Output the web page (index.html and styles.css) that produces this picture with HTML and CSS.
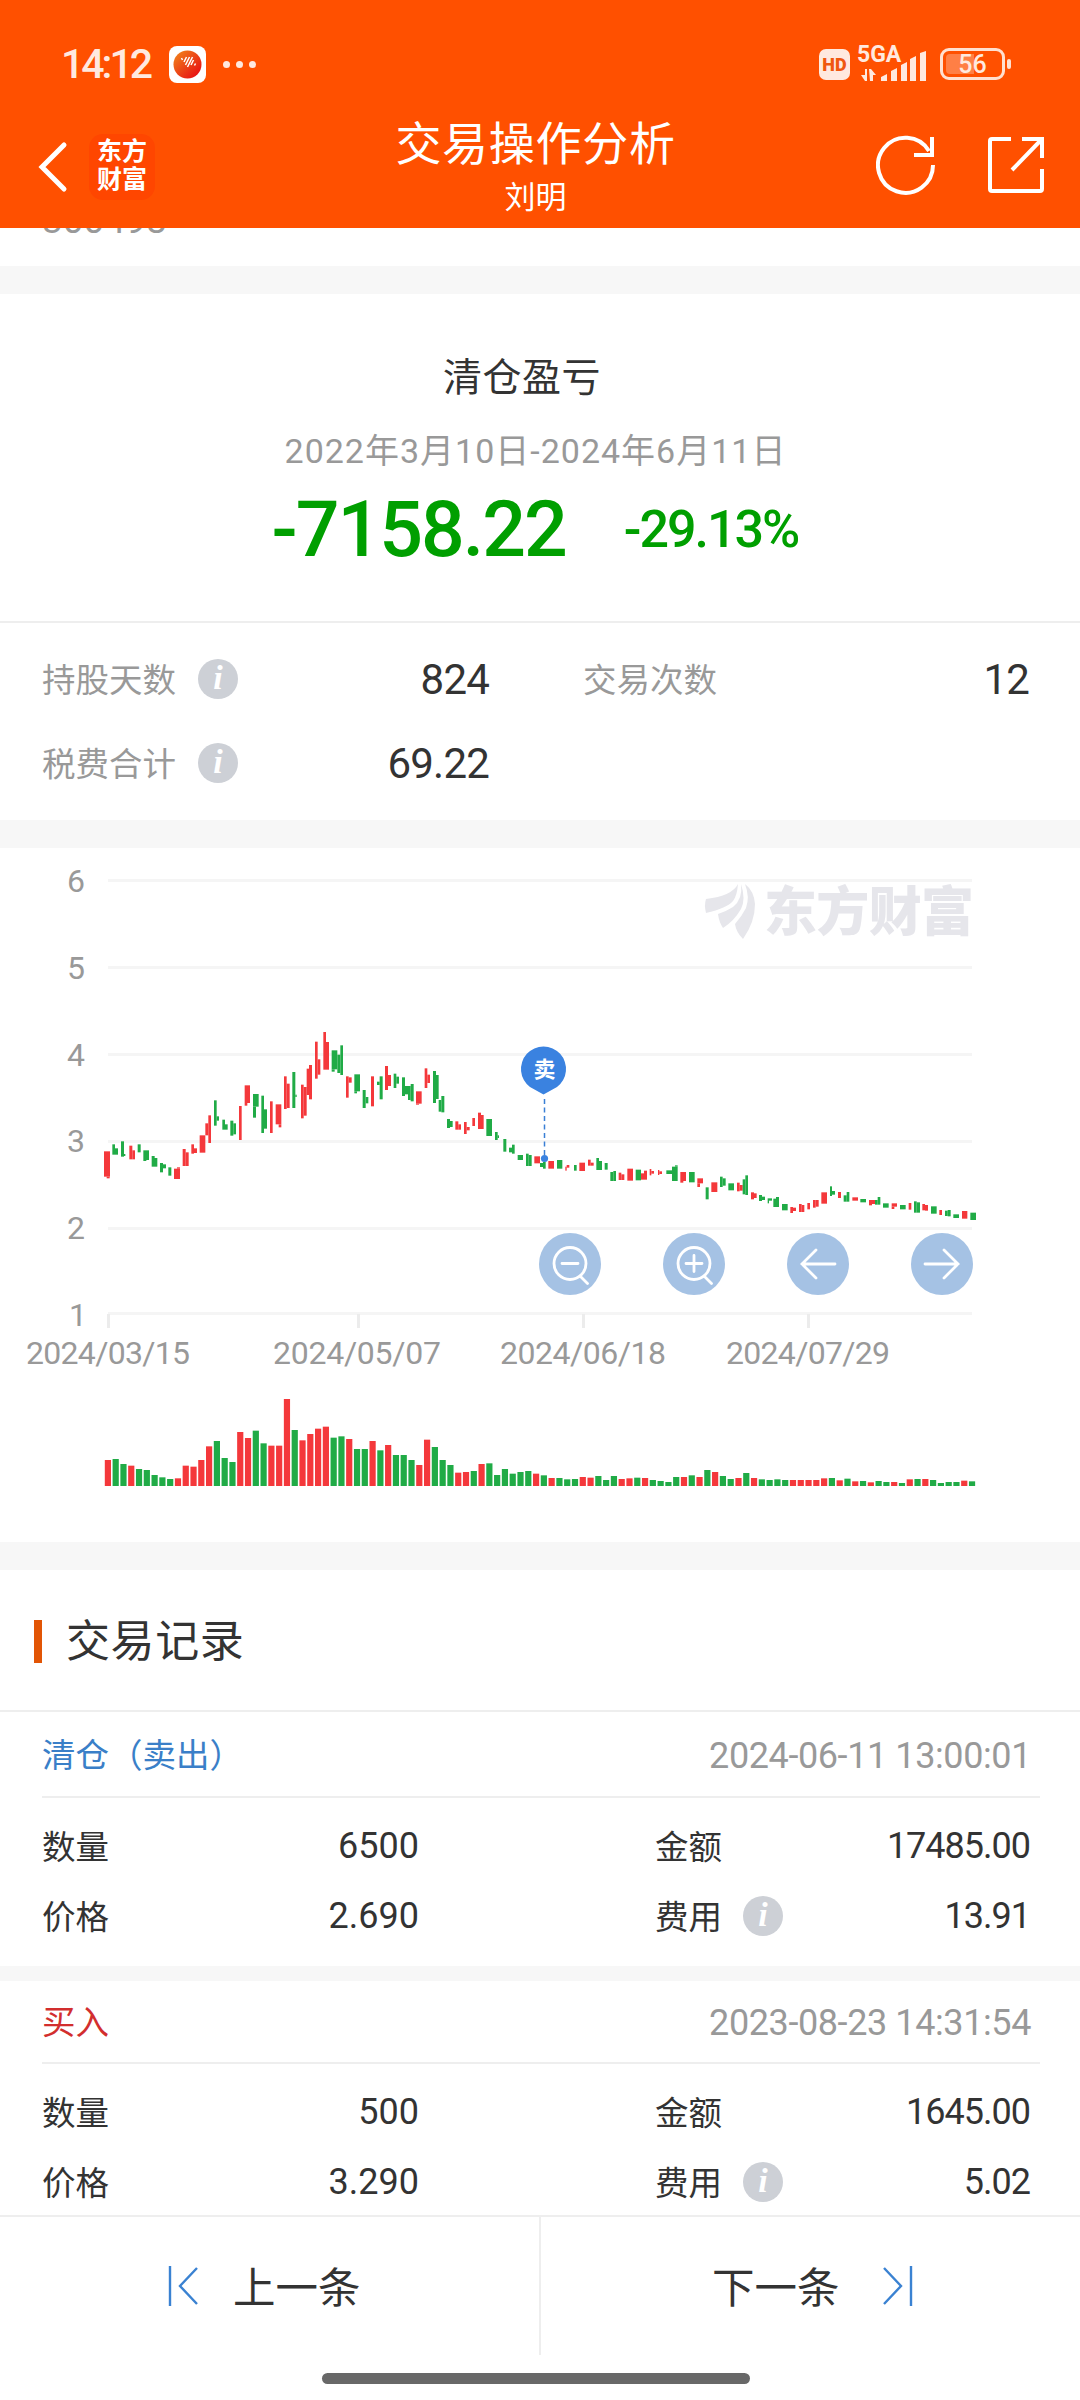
FILE: index.html
```html
<!DOCTYPE html>
<html lang="zh-CN">
<head>
  <meta charset="UTF-8" />
  <title>交易操作分析</title>
  <meta name="viewport" content="width=device-width, initial-scale=1.0" />
  <link rel="stylesheet" href="styles.css">
</head>
<body>
  <div class="app">
    <header class="header">
      <div class="status-bar">
        <span class="time">14:12</span>
        <svg class="app-icon" width="37" height="37" viewBox="0 0 37 37">
          <defs>
            <linearGradient id="ball" x1="0" y1="0" x2="1" y2="1">
              <stop offset="0" stop-color="#f28a1c" />
              <stop offset="1" stop-color="#e60012" />
            </linearGradient>
          </defs>
          <rect width="37" height="37" rx="8" fill="#fff" />
          <circle cx="18.5" cy="18.5" r="14" fill="url(#ball)" />
          <path d="M12.500 12l1 2M15 16l2.500-5M16.500 19l4-8M18.500 21l5-10M22 19l2.500-5M25.500 19.500l1-2" stroke="#fff" stroke-width="1.5" />
        </svg>
        <span class="dots"><i></i><i></i><i></i></span>
        <span class="spacer"></span>
        <span class="hd">HD</span>
        <span class="signal">
          <span class="net">5GA</span>
          <svg width="70" height="36" viewBox="0 0 70 36" fill="#ffe9df">
            <path d="M4 29h4v-6h2v12h-2zM12 23h2l5 6h-3v6h-3z" />
            <path d="M24 31l6-3v7h-6zM34 25l6-3v13h-6zM44 19l6-3v19h-6zM53 13l6-3v25h-6zM63 7l6-2v30h-6z" />
          </svg>
        </span>
        <span class="battery"><span class="battery-fill"></span><b>56</b></span>
        <span class="nub"></span>
      </div>
      <div class="nav">
        <svg class="back" width="30" height="52" viewBox="0 0 30 52">
          <path d="M26 4L4 26l22 22" fill="none" stroke="#fff" stroke-width="5" stroke-linecap="round" />
        </svg>
        <div class="brand">东方<br>财富</div>
        <div class="titles">
          <h1>交易操作分析</h1>
          <p>刘明</p>
        </div>
        <svg class="refresh" width="60" height="60" viewBox="0 0 60 60" fill="none" stroke="#fff" stroke-width="4">
          <path d="M57 30A27.5 27.5 0 1 1 53 16" />
          <path d="M56 2v18H38" />
        </svg>
        <svg class="share" width="60" height="60" viewBox="0 0 60 60" fill="none" stroke="#fff" stroke-width="4">
          <path d="M25 4H6Q4 4 4 6V54Q4 56 6 56H54Q56 56 56 54V34M36 4H56V23M56 4L26 35" />
        </svg>
      </div>
    </header>

    <main class="content">
      <div class="code"><span>300498</span></div>

      <section class="profit">
        <h2>清仓盈亏</h2>
        <p class="range">2022年3月10日-2024年6月11日</p>
        <div class="amounts">
          <span class="amount">-7158.22</span>
          <span class="percent">-29.13%</span>
        </div>
      </section>

      <section class="stats">
        <div class="stat"><span>持股天数</span><i class="info">i</i><b>824</b></div>
        <div class="stat"><span>交易次数</span><b>12</b></div>
        <div class="stat"><span>税费合计</span><i class="info">i</i><b>69.22</b></div>
      </section>

      <section class="chart">
        <svg width="1080" height="694" viewBox="0 848 1080 694">
          <g class="grid">
            <path d="M108 880.5H972M108 967.5H972M108 1054.5H972M108 1141.5H972M108 1228.5H972M108 1313.5H972" />
            <path class="ticks" d="M108.5 1314V1328M358.5 1314V1328M583.5 1314V1328M808.5 1314V1328" />
          </g>
          <g class="axis-y">
            <text x="85" y="892">6</text>
            <text x="85" y="979">5</text>
            <text x="85" y="1066">4</text>
            <text x="85" y="1152">3</text>
            <text x="85" y="1239">2</text>
            <text x="87" y="1326">1</text>
          </g>
          <g class="axis-x">
            <text x="108" y="1364" textLength="164">2024/03/15</text>
            <text x="357" y="1364" textLength="168">2024/05/07</text>
            <text x="583" y="1364" textLength="166">2024/06/18</text>
            <text x="808" y="1364" textLength="164">2024/07/29</text>
          </g>
          <g class="watermark">
            <path d="M738 884Q732 896 706 899Q704 905 706 913Q727 908 733 901Q737 896 738 884Z" />
            <path d="M741 884Q743 899 733 907Q725 912 718 914Q719 922 723 928Q734 921 741 909Q746 899 741 884Z" />
            <path d="M745 884Q750 897 746 908Q742 916 735 924Q736 932 743 939Q755 922 755 904Q754 891 745 884Z" />
            <text x="764" y="931" textLength="210">东方财富</text>
          </g>
          <g id="candles"></g>
          <g id="volumes"></g>
          <g class="pin">
            <path d="M544.5 1155V1096" stroke="#3a7fd5" stroke-width="1.5" stroke-dasharray="5 3.5" />
            <circle cx="544.5" cy="1158.5" r="3.6" />
            <path d="M543.5 1094.5L530 1087A22.5 22.5 0 1 1 557 1087Z" />
            <text x="544.5" y="1077">卖</text>
          </g>
        </svg>
        <div class="tools">
          <button><svg viewBox="0 0 62 62"><circle cx="31" cy="30.5" r="16" /><path d="M41.500 43.500l7 7M23 30.500h16" /></svg></button>
          <button><svg viewBox="0 0 62 62"><circle cx="31" cy="30.5" r="16" /><path d="M41.500 43.500l7 7M23 30.500h16M31 22.500v16" /></svg></button>
          <button><svg viewBox="0 0 62 62"><path d="M48 31H15M29 17L15 31l14 14" /></svg></button>
          <button><svg viewBox="0 0 62 62"><path d="M14 31h33M33 17l14 14-14 14" /></svg></button>
        </div>
      </section>

      <section class="records">
        <h3><span>交易记录</span></h3>
        <div class="record">
          <div class="record-head"><span class="sell">清仓（卖出）</span><time>2024-06-11 13:00:01</time></div>
          <div class="record-body">
            <div class="cell"><span>数量</span><b>6500</b></div>
            <div class="cell"><span>金额</span><b>17485.00</b></div>
            <div class="cell"><span>价格</span><b>2.690</b></div>
            <div class="cell"><span>费用</span><i class="info">i</i><b>13.91</b></div>
          </div>
        </div>
        <div class="record">
          <div class="record-head"><span class="buy">买入</span><time>2023-08-23 14:31:54</time></div>
          <div class="record-body">
            <div class="cell"><span>数量</span><b>500</b></div>
            <div class="cell"><span>金额</span><b>1645.00</b></div>
            <div class="cell"><span>价格</span><b>3.290</b></div>
            <div class="cell"><span>费用</span><i class="info">i</i><b>5.02</b></div>
          </div>
        </div>
      </section>
    </main>

    <footer class="footer">
      <div class="pager">
        <a class="prev">
          <svg width="32" height="42" viewBox="0 0 32 42"><path d="M2 1v40M29 3L12 21l17 18" /></svg>
          <span>上一条</span>
        </a>
        <a class="next">
          <span>下一条</span>
          <svg width="32" height="42" viewBox="0 0 32 42"><path d="M30 1v40M3 3l17 18L3 39" /></svg>
        </a>
      </div>
      <div class="home-bar"></div>
    </footer>
  </div>
  <script src="chart.js"></script>
</body>
</html>
```
FILE: styles.css
```css
* {
  box-sizing: border-box;
}

body {
  margin: 0;
  background: #fff;
  color: #333;
  font-family: Roboto, "Noto Sans CJK SC", sans-serif;
}

h1, h2, h3, p {
  margin: 0;
  font-weight: 400;
}

b {
  font-weight: 400;
}

.app {
  width: 1080px;
  height: 2400px;
  display: flex;
  flex-direction: column;
  overflow: hidden;
}

/* header */
.header {
  height: 228px;
  flex: none;
  background: #ff5000;
  color: #fff;
}

.status-bar {
  height: 105px;
  padding: 23px 69px 0 61px;
  display: flex;
  align-items: center;
  color: #ffe9df;
}

.time {
  width: 108px;
  font-size: 41px;
  font-weight: 500;
  letter-spacing: -3px;
}

.dots {
  display: flex;
  gap: 6px;
  margin-left: 17px;
}

.dots i {
  width: 7px;
  height: 7px;
  border-radius: 50%;
  background: #ffe9df;
}

.spacer {
  flex: 1;
}

.hd {
  width: 31px;
  height: 31px;
  border-radius: 7px;
  background: #ffe9df;
  color: #f0570f;
  font-size: 18px;
  font-weight: 900;
  line-height: 31px;
  text-align: center;
  margin-right: 7px;
}

.signal {
  position: relative;
  width: 70px;
  height: 36px;
  margin-right: 13px;
}

.net {
  position: absolute;
  left: 0;
  top: -4px;
  font-size: 23px;
  font-weight: 700;
  line-height: 26px;
}

.battery {
  width: 65px;
  height: 32px;
  border: 3px solid #ffe0d0;
  border-radius: 9px;
  position: relative;
  text-align: center;
}

.battery b {
  position: relative;
  font-size: 25px;
  font-weight: 500;
  line-height: 27px;
}

.battery-fill {
  position: absolute;
  left: 3px;
  top: 3px;
  width: 28px;
  height: 20px;
  border-radius: 4px 0 0 4px;
  background: #ff7f45;
}

.nub {
  width: 4px;
  height: 10px;
  margin-left: 2px;
  border-radius: 2px;
  background: #ffe0d0;
}

.nav {
  height: 123px;
  display: flex;
  align-items: center;
  padding: 0 34px 0 38px;
}

.back {
  margin-top: 1px;
}

.brand {
  width: 66px;
  height: 66px;
  margin-left: 21px;
  padding-top: 4px;
  border-radius: 14px;
  background: #ff4600;
  font-size: 25px;
  font-weight: 700;
  line-height: 28px;
  text-align: center;
}

.titles {
  flex: 1;
  padding-right: 20px;
  text-align: center;
  margin-left: 60px;
}

.titles h1 {
  font-size: 46px;
  line-height: 62px;
  letter-spacing: 0.7px;
}

.titles p {
  font-size: 31px;
  line-height: 46px;
}

.refresh, .share {
  margin-bottom: 3px;
}

.share {
  margin-left: 50px;
}

/* stock code left from the block above, cut by the header */
.code {
  height: 66px;
  flex: none;
  overflow: hidden;
  border-bottom: 28px solid #f7f7f7;
}

.code span {
  display: block;
  margin: -29px 0 0 42px;
  font-size: 37px;
  line-height: 44px;
  color: #999;
}

/* profit summary */
.profit {
  height: 329px;
  padding-top: 56px;
  text-align: center;
  border-bottom: 2px solid #eee;
}

.profit h2 {
  font-size: 39px;
  line-height: 56px;
  letter-spacing: 0.5px;
  padding-right: 36px;
}

.range {
  margin-top: 19px;
  padding-right: 9px;
  font-size: 34px;
  line-height: 52px;
  letter-spacing: 1px;
  color: #999;
}

.amounts {
  display: flex;
  justify-content: center;
  align-items: center;
  gap: 58px;
  margin-top: 13px;
  padding-right: 10px;
  color: #009f00;
  font-weight: 500;
}

.amount {
  font-size: 77px;
  line-height: 80px;
  letter-spacing: -2px;
}

.percent {
  font-size: 52px;
  line-height: 80px;
  letter-spacing: -2px;
}

/* stats */
.stats {
  height: 225px;
  padding: 14px 51px 0 42px;
  display: grid;
  grid-template-columns: 447px 446px;
  grid-auto-rows: 84px;
  column-gap: 94px;
  border-bottom: 28px solid #f7f7f7;
}

.stat {
  display: flex;
  align-items: center;
  font-size: 33.5px;
  color: #999;
}

.stat span, .cell span, .record-head span, .records h3 span, .pager span {
  padding-bottom: 4px;
}

.stat b {
  margin-left: auto;
  color: #333;
  font-size: 42px;
  letter-spacing: -0.8px;
}

.info {
  width: 40px;
  height: 40px;
  margin-left: 22px;
  border-radius: 50%;
  background: #cdd0d6;
  color: #fff;
  font: italic bold 34px/38px "Liberation Serif", serif;
  text-align: center;
}

/* chart */
.chart {
  position: relative;
  height: 722px;
  border-bottom: 28px solid #f7f7f7;
}

.chart > svg {
  display: block;
}

.grid {
  fill: none;
  stroke: #f5f5f5;
  stroke-width: 3;
}

.ticks {
  stroke: #ececec;
}

.axis-x, .axis-y {
  fill: #999;
  font-size: 32px;
}

.axis-x {
  text-anchor: middle;
}

.axis-y {
  text-anchor: end;
}

.watermark {
  fill: #e6e6eb;
}

.watermark text {
  font-size: 53px;
  font-weight: 900;
}

.up {
  fill: #f4383b;
}

.down {
  fill: #20ab46;
}

.pin {
  fill: #3a82e0;
}

.pin text {
  fill: #fff;
  font-size: 22px;
  font-weight: 700;
  text-anchor: middle;
}

.tools {
  position: absolute;
  left: 539px;
  top: 385px;
  width: 434px;
  display: flex;
  justify-content: space-between;
}

.tools button {
  width: 62px;
  height: 62px;
  padding: 0;
  border: none;
  border-radius: 50%;
  background: #a5c2e4;
}

.tools svg {
  display: block;
  fill: none;
  stroke: #fff;
  stroke-width: 2.8;
  stroke-linecap: round;
}

/* records */
.records h3 {
  height: 142px;
  padding-left: 34px;
  display: flex;
  align-items: center;
  gap: 24px;
  font-size: 44px;
  letter-spacing: 0.6px;
  border-bottom: 2px solid #eee;
}

.records h3::before {
  content: "";
  width: 8px;
  height: 43px;
  margin-top: 2px;
  background: #e25505;
}

.record {
  height: 269px;
  padding: 0 40px 0 42px;
  border-bottom: 15px solid #f7f7f7;
}

.record-head {
  height: 86px;
  display: flex;
  align-items: center;
  justify-content: space-between;
  padding-right: 9px;
  font-size: 33.5px;
  border-bottom: 2px solid #eee;
}

.record:last-child .record-head {
  height: 83px;
}

.sell {
  color: #3a7fc8;
}

.buy {
  color: #d22e2e;
}

time {
  margin-top: 3px;
  color: #999;
  font-size: 36px;
  letter-spacing: -0.4px;
}

.record-body {
  padding: 13px 10px 0 0;
  display: grid;
  grid-template-columns: 377px 375px;
  justify-content: space-between;
  grid-auto-rows: 70px;
}

.cell {
  display: flex;
  align-items: center;
  font-size: 33.5px;
}

.cell .info {
  margin-left: 21px;
}

.cell b {
  margin-left: auto;
  font-size: 36px;
}

.cell:nth-child(even) b {
  letter-spacing: -1px;
}

/* footer */
.content {
  height: 1987px;
  flex: none;
  overflow: hidden;
}

.footer {
  height: 185px;
  border-top: 2px solid #eee;
  background: #fff;
}

.pager {
  display: flex;
  height: 138px;
}

.pager a {
  display: flex;
  align-items: center;
  font-size: 42.5px;
}

.prev {
  width: 541px;
  padding-left: 168px;
  gap: 33px;
  border-right: 2px solid #eee;
}

.next {
  padding-left: 171px;
  gap: 41px;
}

.pager svg {
  fill: none;
  stroke: #3a82d2;
  stroke-width: 2.4;
}

.home-bar {
  width: 428px;
  height: 11px;
  margin: 18px 0 0 322px;
  border-radius: 6px;
  background: #686868;
}
```
FILE: chart.js
```js
// strips of "colour x1-x2,top-bottom", in thirds of a pixel from the strip origin
const strips = [
  { x: 90, y: 1000, bars: `
    r42-60,454-530 r50-59,530-535 g67-75,433-464 g75-84,445-464 g93-102,424-470 g102-106,462-468
    r118-127,437-478 r127-135,451-478 g143-152,433-457 g160-177,451-480 g160-169,480-483
    g185-202,474-500 g185-194,468-474 g210-219,489-517 g219-228,493-505 g235-244,502-527
    r252-270,506-537 r261-270,502-506 r278-287,447-498 r287-296,457-498 r304-312,433-461
    r312-321,445-459 r329-346,406-458 r346-355,370-406 r355-363,346-429 g372-380,301-377
    g380-387,349-362 g397-405,359-389 g405-413,373-389 g421-430,362-407 g430-438,370-403
    r447-455,318-420 r464-480,256-309 r464-472,309-317 g489-506,282-320 g489-498,320-353
    g514-522,287-399 g522-531,328-386 r540-548,304-399 r557-574,313-373 r566-574,373-382
    r582-590,229-327 r590-599,251-324 g607-616,216-324 g616-620,284-291 r633-641,254-355
    r641-650,261-347 r650-657,206-285 r657-666,195-298 r675-683,125-236 r683-691,178-224
    r700-708,96-209 r708-717,126-209 g725-742,151-208 g725-734,208-215 g742-751,164-219
    g751-759,136-225 r768-776,229-293 r776-785,232-248 g793-810,223-274 g793-801,274-280
    g818-827,270-324 g827-835,291-310 r843-852,229-319 g861-869,245-255 g869-878,229-298` },
  { x: 380, y: 1000, bars: `
    r15-24,198-270 r24-33,225-258 g41-49,221-264 g49-57,230-251 g66-75,232-288 g75-84,258-283
    g84-92,258-300 g92-101,252-304 r108-125,274-311 r108-117,311-314 r134-142,205-264
    r142-150,224-249 g159-168,213-309 g168-176,225-297 g176-184,300-335 g184-193,288-337
    g201-210,357-384 g210-218,363-381 r226-235,364-389 r235-243,373-389 r252-260,366-402
    r260-269,381-391 r277-285,354-378 r294-303,338-387 r303-311,345-387 g319-336,357-408
    g345-353,396-420 g353-357,406-414 g370-379,417-455 g387-396,443-457 g396-404,434-461
    g413-429,465-480 g438-446,461-498 g446-455,465-498 r463-480,469-490 g480-489,489-501
    g489-497,486-506 r505-522,483-506 g531-547,480-506 r556-560,500-512 r560-568,495-503
    g582-590,495-512 r598-615,488-513 r624-632,479-497 r632-641,488-497 g649-657,474-510
    g657-666,483-510 g674-683,489-509 g691-700,516-543 g700-708,513-543 r716-724,518-540
    r724-733,523-540 r742-759,506-542 g767-783,509-541 r783-792,520-539 r792-801,512-539
    r809-814,507-526 r814-822,513-521 r834-838,510-525 r838-846,514-522` },
  { x: 660, y: 1100, bars: `
    g19-36,211-222 g36-53,200-243 g45-53,196-200 r61-78,216-243 r61-70,243-248 g87-104,216-247
    r112-129,235-250 r112-120,250-261 g137-146,262-298 r154-172,247-276 g180-188,230-261
    g188-197,235-257 g205-222,250-271 r231-239,248-274 r239-248,255-272 g248-256,238-283
    g256-264,226-285 r273-282,277-298 r282-290,280-294 g297-306,285-303 g306-315,290-300
    g323-327,295-310 g327-336,295-302 g340-348,296-321 g348-357,291-321 g366-383,312-331
    r391-399,321-339 r399-408,323-333 r417-425,312-336 r425-433,315-336 r442-450,309-328
    r459-467,300-323 r467-476,300-320 r484-501,277-311 g510-516,259-288 g516-525,273-284
    r534-543,276-294 g551-560,286-305 g560-568,276-305 r577-594,292-302 g601-618,297-307
    r627-636,300-316 r636-645,300-312 g645-653,300-314 g653-661,291-314 g669-686,310-323
    r695-711,310-320 r695-703,320-327 g720-737,315-328 r746-754,309-329 g762-770,304-338
    g770-780,307-338 r787-795,312-331 r795-804,315-332 g813-830,319-341 r838-846,330-345
    g855-863,332-348 g863-872,330-349 g880-897,343-354 r906-922,333-356 g931-948,338-360` }
];

// volume heights, same unit
const volumes = `r78 g81 g66 r61 g51 g48 g33 g26 g21 r23 r61 r58 r78 r119 g135 g84 g72 r162 r144 g166
  g128 r121 r121 r261 g168 r137 r156 r172 r178 g145 g149 r141 g111 g111 r135 g107 r123 g93 g93 g78
  r63 r139 g117 g78 g63 r40 r42 g45 r66 g68 g33 g51 g37 g42 g45 r37 g32 r24 g24 g20 g21 r27 r25 g30
  g18 g30 r21 r23 g25 r24 g18 g15 g12 g27 r27 g32 r27 g48 r42 g30 g21 r24 g39 r24 g20 g18 g20 g18
  r18 r18 r18 r18 r23 g24 r17 g22 r14 g15 r11 g15 g12 r12 g9 r20 g21 r21 g18 g9 g12 g12 r16 g14`;

function addRect(parent, color, x, y, w, h) {
  const rect = document.createElementNS('http://www.w3.org/2000/svg', 'rect');
  rect.setAttribute('class', color === 'r' ? 'up' : 'down');
  rect.setAttribute('x', x);
  rect.setAttribute('y', y);
  rect.setAttribute('width', w);
  rect.setAttribute('height', h);
  parent.appendChild(rect);
}

const candleGroup = document.getElementById('candles');
strips.forEach(strip => {
  strip.bars.trim().split(/\s+/).forEach(bar => {
    const [x1, x2, top, bottom] = bar.slice(1).split(/[-,]/).map(Number);
    addRect(candleGroup, bar[0], strip.x + x1 / 3, strip.y + top / 3, (x2 - x1) / 3, (bottom - top) / 3);
  });
});

const volumeGroup = document.getElementById('volumes');
volumes.split(/\s+/).forEach((bar, i) => {
  const h = Number(bar.slice(1)) / 3;
  addRect(volumeGroup, bar[0], 104.8 + i * 7.785, 1486 - h, 6.2, h);
});
```
